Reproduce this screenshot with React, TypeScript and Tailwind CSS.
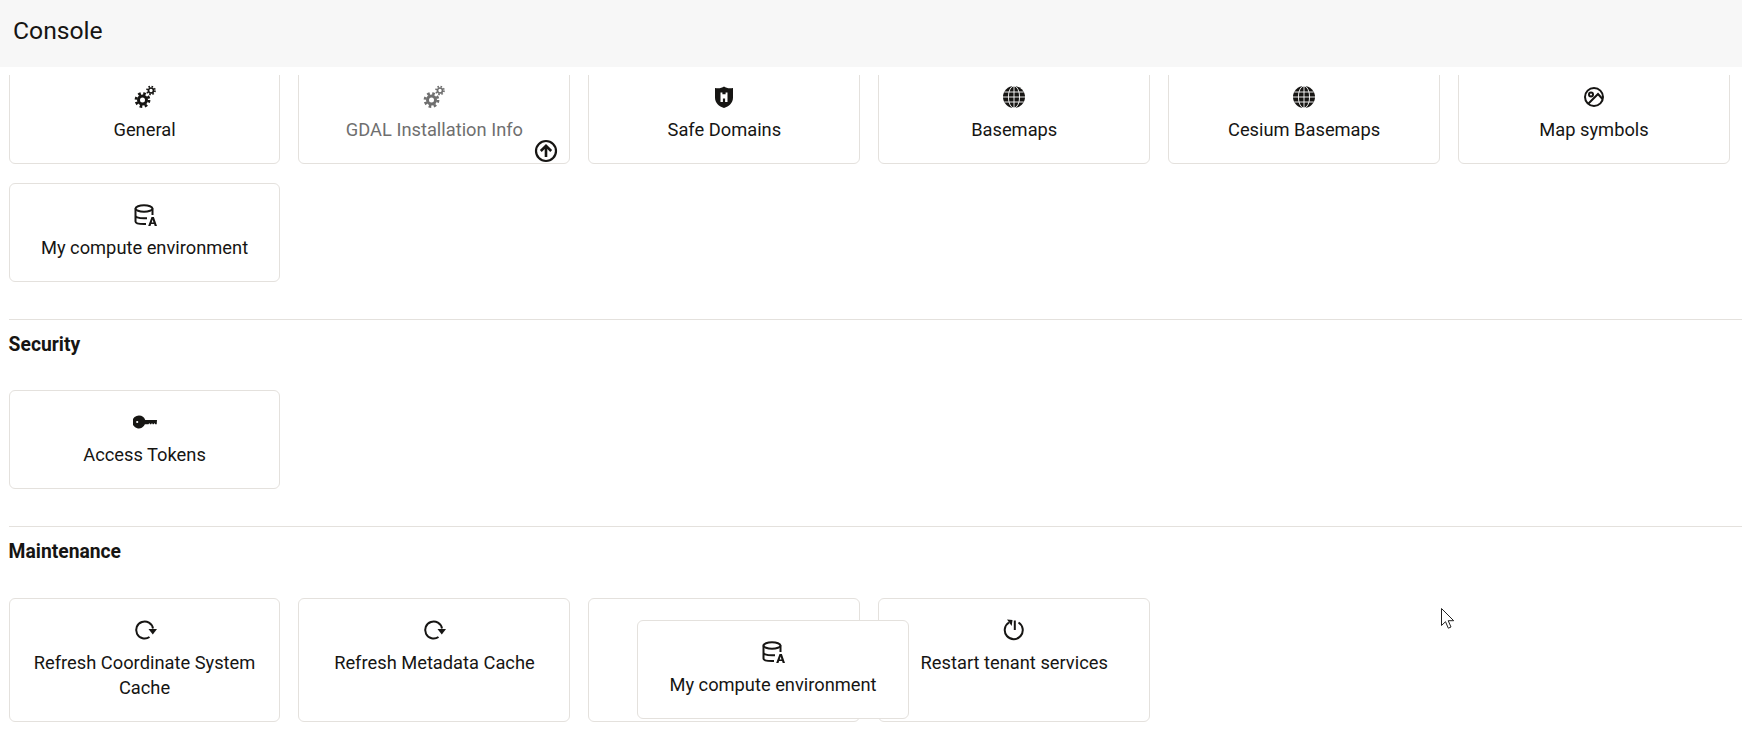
import React from 'react';

const font = { fontFamily: 'Roboto, "Noto Sans", "Liberation Sans", sans-serif' };

function Gears() {
  return (
    <svg viewBox="0 0 24 24" className="w-6 h-6" fill="none" stroke="currentColor">
      <circle cx="9.5" cy="15" r="4" strokeWidth="3" />
      <circle cx="9.5" cy="15" r="6.5" strokeWidth="2.8" strokeDasharray="2.6 2.5" />
      <circle cx="18" cy="5.500" r="2.5" strokeWidth="1.7" />
      <circle cx="18" cy="5.500" r="4" strokeWidth="1.7" strokeDasharray="1.55 1.6" />
    </svg>
  );
}

function Shield() {
  return (
    <svg viewBox="0 0 24 24" className="w-6 h-6">
      <path fill="currentColor" d="M12 1.500c2.200 1.700 5.500 2.200 9 1.500v9.500c0 5.500-4 8.800-9 10.500-5-1.700-9-5-9-10.500V3c3.500.7 6.800.2 9-1.500z" />
      <path fill="#fff" d="M8.500 7.500h1.900v1.800h3.200V7.500h1.900V17h-2.400v-3.500h-2.200V17H8.500z" />
    </svg>
  );
}

function Globe() {
  return (
    <svg viewBox="0 0 24 24" className="w-6 h-6">
      <circle cx="12" cy="12" r="11" fill="currentColor" />
      <g fill="none" stroke="#fff" strokeWidth="0.9">
        <path d="M1 12h22M2.300 7h19.400M2.300 17h19.400M12 1v22" />
        <ellipse cx="12" cy="12" rx="5.600" ry="11" />
      </g>
    </svg>
  );
}

function MapSymbol() {
  return (
    <svg viewBox="0 0 24 24" className="w-6 h-6" fill="none" stroke="currentColor" strokeWidth="2">
      <circle cx="12" cy="12" r="9" />
      <circle cx="9" cy="9.500" r="2" />
      <path d="M6.500 18.500 16 9l4.500 5" />
    </svg>
  );
}

function Database() {
  return (
    <svg viewBox="0 0 24 24" className="w-6 h-6" fill="none" stroke="currentColor" strokeWidth="2">
      <ellipse cx="11" cy="5.500" rx="8.500" ry="3.200" />
      <path d="M2.500 5.500v13c0 1.700 3 2.600 8.500 2.600h2M19.500 5.500V12M2.500 12.500c0 1.600 3 2.800 8.500 2.800h3" />
      <path fill="currentColor" stroke="none" d="M18.500 14h2.400l3.100 9h-2.300l-.6-2h-3l-.6 2h-2.300zM18.700 19.400h1.800l-.9-2.900z" fillRule="evenodd" />
    </svg>
  );
}

function Key() {
  return (
    <svg viewBox="0 0 24 24" className="w-6 h-6">
      <path fill="currentColor" fillRule="evenodd" d="M6 5.500a6.500 6.500 0 0 1 6.200 4.500H24l-.3 4.300h-1.500l-.7-1.300-.8 1.300h-1l-.7-1.300-.8 1.300h-1.200l-.7-1.300-.8 1.300h-3.600A6.500 6.500 0 1 1 6 5.500zM4.200 10.900a1.100 1.100 0 1 0 0 2.200 1.100 1.100 0 0 0 0-2.200z" />
    </svg>
  );
}

function Refresh() {
  return (
    <svg viewBox="0 0 24 24" className="w-6 h-6" fill="none" stroke="currentColor" strokeWidth="2">
      <path d="M16.500 19A8.500 8.500 0 1 1 20 10.500" />
      <path fill="currentColor" stroke="none" d="M15.500 11h8.500l-4.200 5.500z" />
    </svg>
  );
}

function Power() {
  return (
    <svg viewBox="0 0 24 24" className="w-6 h-6" fill="none" stroke="currentColor" strokeWidth="2">
      <path d="M12.800 2.500v9.500" />
      <path d="M16.500 4.500a9 9 0 1 1-9.500 0" />
      <path fill="currentColor" stroke="none" d="M5 1.500 10.500 2l-.8 6z" />
    </svg>
  );
}

function ArrowBadge() {
  return (
    <svg viewBox="0 0 24 24" className="w-6 h-6" fill="none" stroke="currentColor">
      <circle cx="12" cy="12" r="10" strokeWidth="2.200" />
      <path strokeWidth="2.600" d="M12 18V7M6.800 12 12 6.800l5.200 5.200" />
    </svg>
  );
}

function Cursor() {
  return (
    <svg viewBox="0 0 16 24" className="w-4 h-6">
      <path fill="#fff" stroke="#222" strokeWidth="1" d="M1.500 1.500v17l4-3.800 2.800 6.500 2.700-1.200-2.800-6.300h5.500z" />
    </svg>
  );
}

function Card({ icon, label, muted, badge }: { icon: React.ReactNode; label: string; muted?: boolean; badge?: boolean }) {
  return (
    <div className="relative flex flex-col items-center bg-white border border-[#e4e1dd] rounded-[6px] px-3 pt-[19px] pb-[21px] text-center">
      <div className={muted ? 'text-[#6f6f6f]' : 'text-[#161513]'}>{icon}</div>
      <div className={`mt-[8px] text-[18.3px] leading-[25px] ${muted ? 'text-[#6f6f6f]' : 'text-[#161513]'}`}>{label}</div>
      {badge && (
        <div className="absolute right-[11px] bottom-0 text-[#161513]">
          <ArrowBadge />
        </div>
      )}
    </div>
  );
}

function Section({ title, gridClass, children }: { title: string; gridClass: string; children: React.ReactNode }) {
  return (
    <section className="mt-[37px] border-t border-[#e4e1dd] pt-[12px]">
      <h2 className="text-[19.3px] leading-[25px] font-bold text-[#161513]">{title}</h2>
      <div className={`${gridClass} pr-[12px] grid grid-cols-6 gap-x-[18px] gap-y-5`}>{children}</div>
    </section>
  );
}

export default function App() {
  return (
    <div className="relative w-[1742px] h-[741px] overflow-hidden bg-white" style={font}>
      <header className="h-[67px] bg-[#f7f7f7] flex items-center pl-[13px] pb-[5px]">
        <h1 className="text-[24.7px] leading-8 font-normal text-[#161513]">Console</h1>
      </header>

      <main className="mt-2 h-[666px] overflow-hidden pl-[8.6px]">
        <div className="-mt-[10px] pr-[12px] grid grid-cols-6 gap-x-[18px] gap-y-[19px]">
          <Card icon={<Gears />} label="General" />
          <Card icon={<Gears />} label="GDAL Installation Info" muted badge />
          <Card icon={<Shield />} label="Safe Domains" />
          <Card icon={<Globe />} label="Basemaps" />
          <Card icon={<Globe />} label="Cesium Basemaps" />
          <Card icon={<MapSymbol />} label="Map symbols" />
          <Card icon={<Database />} label="My compute environment" />
        </div>

        <Section title="Security" gridClass="mt-[33px]">
          <Card icon={<Key />} label="Access Tokens" />
        </Section>

        <Section title="Maintenance" gridClass="mt-[34px]">
          <Card icon={<Refresh />} label="Refresh Coordinate System Cache" />
          <Card icon={<Refresh />} label="Refresh Metadata Cache" />
          <div className="bg-white border border-[#e4e1dd] rounded-[6px]" />
          <Card icon={<Power />} label="Restart tenant services" />
        </Section>
      </main>

      {/* card being dragged */}
      <div className="absolute left-[637px] top-[620px] w-[272px]">
        <Card icon={<Database />} label="My compute environment" />
      </div>

      <div className="absolute left-[1440px] top-[607px]">
        <Cursor />
      </div>
    </div>
  );
}
